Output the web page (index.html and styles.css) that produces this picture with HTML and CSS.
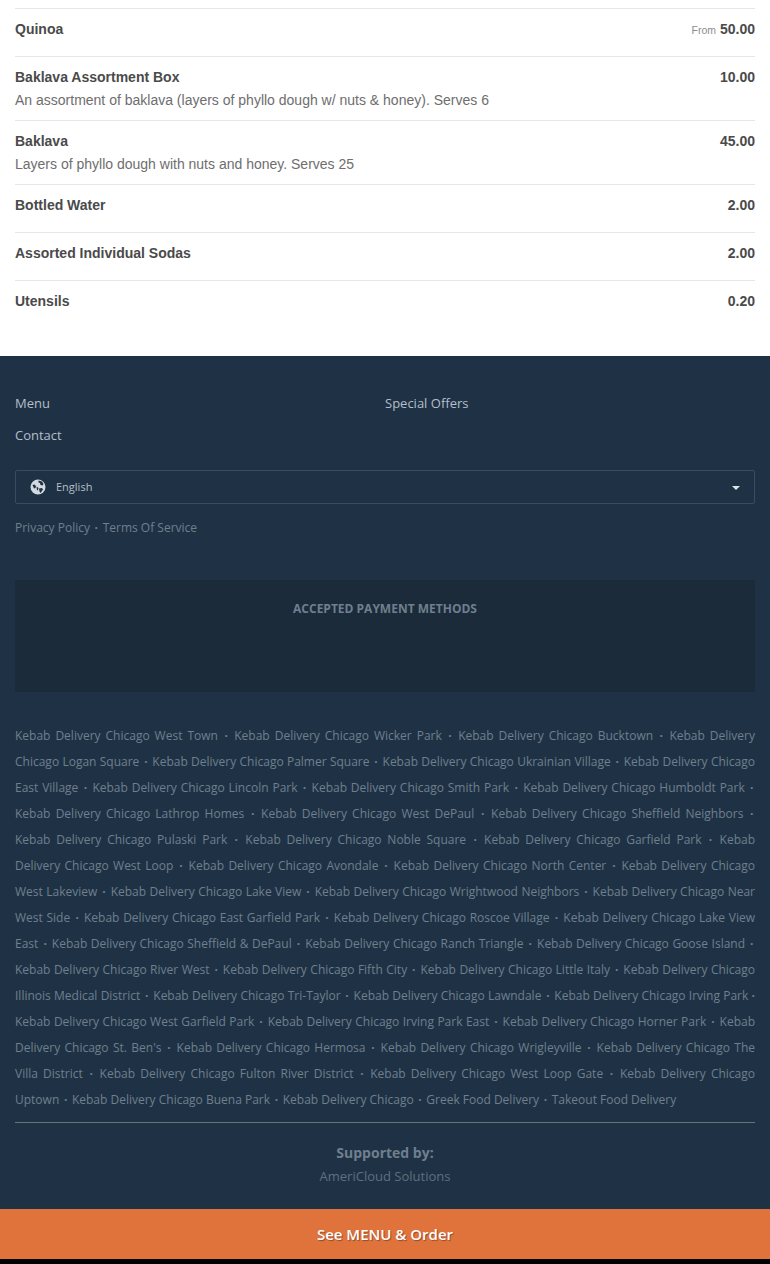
FILE: index.html
```html
<!DOCTYPE html>
<html lang="en">
<head>
<meta charset="utf-8">
<title>Menu</title>
<link rel="stylesheet" href="styles.css">
</head>
<body>
<main class="menu">
  <div class="item"><div class="line"><span class="name">Quinoa</span><span class="price"><small>From</small> 50.00</span></div></div>
  <div class="item"><div class="line"><span class="name">Baklava Assortment Box</span><span class="price">10.00</span></div><p class="desc">An assortment of baklava (layers of phyllo dough w/ nuts &amp; honey). Serves 6</p></div>
  <div class="item"><div class="line"><span class="name">Baklava</span><span class="price">45.00</span></div><p class="desc">Layers of phyllo dough with nuts and honey. Serves 25</p></div>
  <div class="item"><div class="line"><span class="name">Bottled Water</span><span class="price">2.00</span></div></div>
  <div class="item"><div class="line"><span class="name">Assorted Individual Sodas</span><span class="price">2.00</span></div></div>
  <div class="item last"><div class="line"><span class="name">Utensils</span><span class="price">0.20</span></div></div>
</main>
<footer class="footer">
  <nav class="nav">
    <a>Menu</a><a>Special Offers</a><a>Contact</a>
  </nav>
  <div class="lang">
    <svg class="globe" width="16" height="16" viewBox="0 0 16 16"><circle cx="8" cy="8" r="7.500" fill="#d3d9de"/><path d="M8.500 1.500 12 2.500 13.500 5l-1 1.500-2-.5-.5-2-1.500-.5zM2.500 6l2-.5 1.500 1.500-.5 2-1.500.5zM6.500 7.500 8.500 9l-.5 2-1 .5zM9 9.500l3-.5 1 1.500L10.500 14 9.500 12.500z" fill="#1f3245"/></svg>
    <span class="lang-label">English</span>
    <span class="caret"></span>
  </div>
  <div class="legal"><a>Privacy Policy</a> <span class="sep">·</span> <a>Terms Of Service</a></div>
  <section class="pay">ACCEPTED PAYMENT METHODS</section>
  <div class="areas">Kebab Delivery Chicago West Town <span class="sep">·</span> Kebab Delivery Chicago Wicker Park <span class="sep">·</span> Kebab Delivery Chicago Bucktown <span class="sep">·</span> Kebab Delivery Chicago Logan Square <span class="sep">·</span> Kebab Delivery Chicago Palmer Square <span class="sep">·</span> Kebab Delivery Chicago Ukrainian Village <span class="sep">·</span> Kebab Delivery Chicago East Village <span class="sep">·</span> Kebab Delivery Chicago Lincoln Park <span class="sep">·</span> Kebab Delivery Chicago Smith Park <span class="sep">·</span> Kebab Delivery Chicago Humboldt Park <span class="sep">·</span> Kebab Delivery Chicago Lathrop Homes <span class="sep">·</span> Kebab Delivery Chicago West DePaul <span class="sep">·</span> Kebab Delivery Chicago Sheffield Neighbors <span class="sep">·</span> Kebab Delivery Chicago Pulaski Park <span class="sep">·</span> Kebab Delivery Chicago Noble Square <span class="sep">·</span> Kebab Delivery Chicago Garfield Park <span class="sep">·</span> Kebab Delivery Chicago West Loop <span class="sep">·</span> Kebab Delivery Chicago Avondale <span class="sep">·</span> Kebab Delivery Chicago North Center <span class="sep">·</span> Kebab Delivery Chicago West Lakeview <span class="sep">·</span> Kebab Delivery Chicago Lake View <span class="sep">·</span> Kebab Delivery Chicago Wrightwood Neighbors <span class="sep">·</span> Kebab Delivery Chicago Near West Side <span class="sep">·</span> Kebab Delivery Chicago East Garfield Park <span class="sep">·</span> Kebab Delivery Chicago Roscoe Village <span class="sep">·</span> Kebab Delivery Chicago Lake View East <span class="sep">·</span> Kebab Delivery Chicago Sheffield &amp; DePaul <span class="sep">·</span> Kebab Delivery Chicago Ranch Triangle <span class="sep">·</span> Kebab Delivery Chicago Goose Island <span class="sep">·</span> Kebab Delivery Chicago River West <span class="sep">·</span> Kebab Delivery Chicago Fifth City <span class="sep">·</span> Kebab Delivery Chicago Little Italy <span class="sep">·</span> Kebab Delivery Chicago Illinois Medical District <span class="sep">·</span> Kebab Delivery Chicago Tri-Taylor <span class="sep">·</span> Kebab Delivery Chicago Lawndale <span class="sep">·</span> Kebab Delivery Chicago Irving Park <span class="sep tight">·</span> Kebab Delivery Chicago West Garfield Park <span class="sep">·</span> Kebab Delivery Chicago Irving Park East <span class="sep">·</span> Kebab Delivery Chicago Horner Park <span class="sep">·</span> Kebab Delivery Chicago St. Ben's <span class="sep">·</span> Kebab Delivery Chicago Hermosa <span class="sep">·</span> Kebab Delivery Chicago Wrigleyville <span class="sep">·</span> Kebab Delivery Chicago The Villa District <span class="sep">·</span> Kebab Delivery Chicago Fulton River District <span class="sep">·</span> Kebab Delivery Chicago West Loop Gate <span class="sep">·</span> Kebab Delivery Chicago Uptown <span class="sep">·</span> Kebab Delivery Chicago Buena Park <span class="sep">·</span> Kebab Delivery Chicago <span class="sep">·</span> Greek Food Delivery <span class="sep">·</span> Takeout Food Delivery</div>
  <hr class="rule">
  <div class="support">
    <strong>Supported by:</strong>
    <a>AmeriCloud Solutions</a>
  </div>
</footer>
<div class="cta">See MENU &amp; Order</div>
<div class="strip"></div>
</body>
</html>
```
FILE: styles.css
```css
* { box-sizing: border-box; }
html, body { margin: 0; padding: 0; background: #fff; }
body { height: 1264px; overflow: hidden; font-family: "Open Sans", sans-serif; }

.menu { padding: 8px 15px 0; height: 356px; font-family: "Liberation Sans", Arial, sans-serif; font-size: 14px; }
.item { border-top: 1px solid #e6e6e6; padding: 10px 0; min-height: 48px; }
.line { display: flex; justify-content: space-between; line-height: 20px; }
.name { font-weight: 700; color: #4a4a4a; }
.price { font-weight: 700; color: #4a4a4a; }
.price small { font-size: 10.5px; font-weight: 400; color: #8c8c8c; }
.desc { margin: 3px 0 0; line-height: 20px; color: #6e6e6e; }

.footer { height: 853px; background: #1f3245; padding: 31px 15px 0; }
.nav { display: grid; grid-template-columns: 1fr 1fr; font-size: 13px; line-height: 32px; color: #b4bec8; }
.nav a { display: block; }
.lang { display: flex; align-items: center; height: 34px; margin-top: 19px; padding: 0 14px; border: 1px solid #3a4d60; border-radius: 2px; font-size: 11px; color: #b4bec8; }
.globe { flex: none; margin-right: 10px; }
.lang-label { flex: 1; padding-bottom: 2px; }
.caret { width: 0; height: 0; margin-top: 2px; border-left: 4px solid transparent; border-right: 4px solid transparent; border-top: 4px solid #dfe4e8; }
.legal { margin-top: 14px; font-size: 12px; line-height: 20px; color: #6f7f8e; }
.sep { margin: 0 1.5px; font-weight: 700; }
.sep.tight { margin: 0; }
.pay { height: 112px; margin-top: 42px; padding-top: 20px; background: #1b2b3a; text-align: center; font-size: 12px; line-height: 18px; font-weight: 700; color: #6f7f8e; }
.areas { margin-top: 31px; font-size: 12px; line-height: 26px; color: #6f7f8e; text-align: justify; }
.rule { height: 1px; margin: 9px 0 0; border: 0; background: #66737f; }
.support { margin-top: 20px; text-align: center; color: #6f7f8e; }
.support strong { display: block; font-size: 14px; line-height: 20px; }
.support a { display: block; margin-top: 3px; font-size: 13px; line-height: 20px; color: #5f6f7e; }

.cta { height: 50px; background: #e0733c; color: #fff; text-align: center; font-size: 15px; font-weight: 600; line-height: 50px; text-shadow: 1px 1px 1px rgba(0,0,0,.35); }
.strip { height: 5px; background: #000; }
```
